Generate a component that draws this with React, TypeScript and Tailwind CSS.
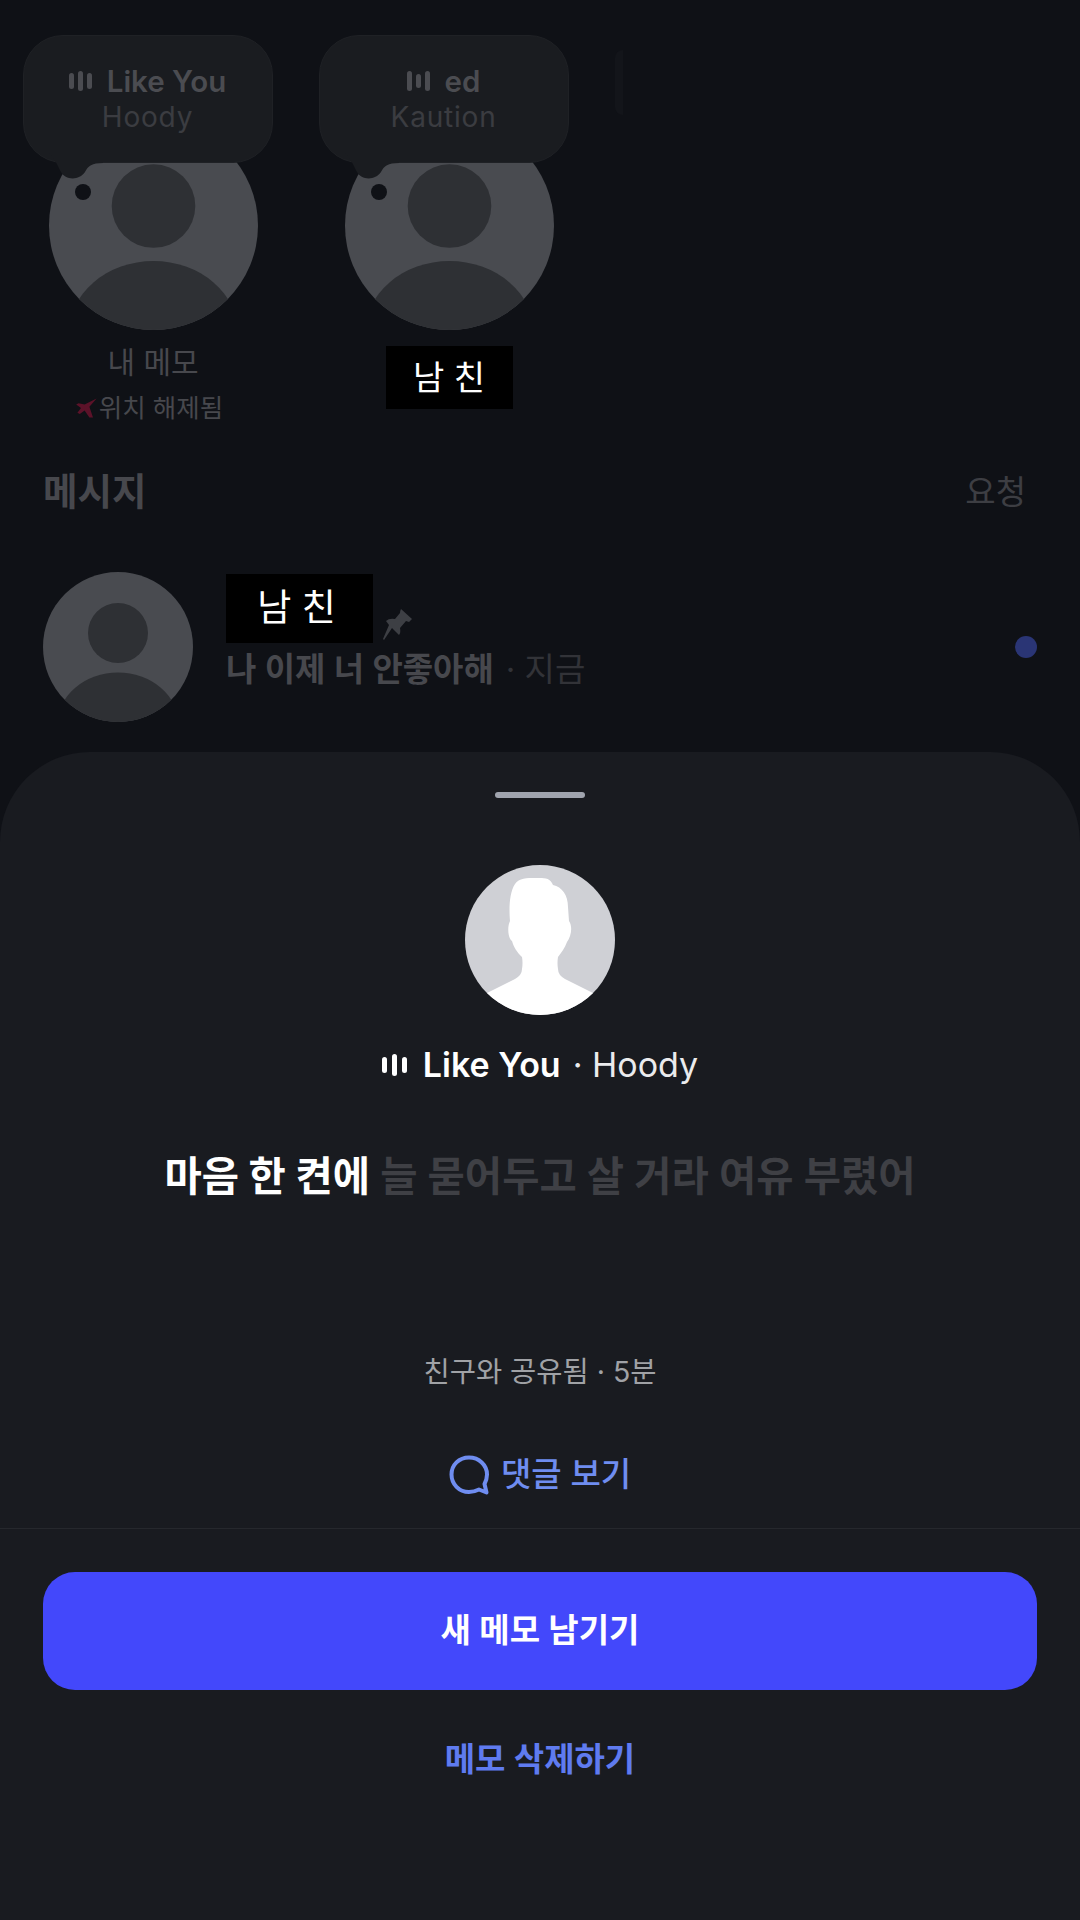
const sans = "font-['Inter','Noto_Sans_CJK_KR',sans-serif]";

function Bars({ heights, className }: { heights: number[]; className: string }) {
  return (
    <span className={`flex items-center ${className}`}>
      {heights.map((h, i) => (
        <span key={i} className="w-[5px] rounded-full bg-current" style={{ height: h }} />
      ))}
    </span>
  );
}

function PlaceholderAvatar({ className }: { className: string }) {
  return (
    <svg viewBox="0 0 100 100" className={className}>
      <defs>
        <clipPath id="avatar-clip">
          <circle cx="50" cy="50" r="50" />
        </clipPath>
      </defs>
      <circle cx="50" cy="50" r="50" fill="#494b50" />
      <circle cx="50" cy="40.7" r="20" fill="#2e3034" />
      <ellipse cx="50" cy="102" rx="40.6" ry="35" fill="#2e3034" clipPath="url(#avatar-clip)" />
    </svg>
  );
}

function NoteBubble({ title, artist, bars }: { title: string; artist: string; bars: number[] }) {
  return (
    <div className="absolute -left-[26px] -top-[86px] z-10 h-[128px] w-[250px]">
      <div className="flex h-full flex-col items-center justify-center rounded-[40px] border border-[#1f2125] bg-[#1a1c20]">
        <div className="flex items-center gap-[15px] text-[29.5px] font-semibold leading-[36px] text-[#4b4c51]">
          <Bars heights={bars} className="gap-[4px] text-[#4b4c51]" />
          {title}
        </div>
        <div className="text-[28px] leading-[36px] tracking-[0.8px] text-[#3b3c41]">{artist}</div>
      </div>
      {/* tail that runs out of the lower left corner */}
      <svg viewBox="0 0 250 150" className="absolute left-0 top-0 h-[150px] w-[250px]">
        <path fill="#1a1c20" d="M26 118 C33 125 34 130 38 137 C42 145 56 146 62 137 C65 131 69 128 80 128 L80 110 L26 110 Z" />
      </svg>
      <div className="absolute left-[52px] top-[149px] h-[16px] w-[16px] rounded-full bg-[#0f1116]" />
    </div>
  );
}

function Story({ children, note }: { children: React.ReactNode; note: React.ReactNode }) {
  return (
    <div className="relative flex w-[209px] flex-col items-center">
      {note}
      <PlaceholderAvatar className="h-[209px] w-[209px]" />
      {children}
    </div>
  );
}

function MaskedName({ className, textClass }: { className: string; textClass: string }) {
  return (
    <div className={`flex items-center justify-center bg-black text-white ${className}`}>
      <span className={textClass}>남 친</span>
    </div>
  );
}

function Silhouette() {
  return (
    <svg viewBox="0 0 150 150" className="h-[150px] w-[150px]">
      <defs>
        <clipPath id="sheet-avatar-clip">
          <circle cx="75" cy="75" r="75" />
        </clipPath>
      </defs>
      <circle cx="75" cy="75" r="75" fill="#cfd0d5" />
      <path
        fill="#ffffff"
        clipPath="url(#sheet-avatar-clip)"
        d="M20 129 L50 114 Q57 110 57 104 Q58 98 57 92 C52 87 49 83 47 76 C43 73 42 62 45 56 C44 45 44 28 50 19 C54 13 62 13 70 13 C78 13 85 12 88 20 C97 22 103 30 103 42 L104 56 C108 62 106 72 102 77 C100 83 96 88 93 92 Q92 98 93 104 Q93 110 100 114 L130 129 L130 160 L20 160 Z"
      />
    </svg>
  );
}

function PinIcon() {
  return (
    <svg viewBox="0 0 30 32" className="mb-[2px] ml-[10px] h-[32px] w-[30px]">
      <path fill="#3d3f44" d="M18 0 L29 10 L26 13 L23 12 L17 19 Q18 24 16 26 L9 19 L1 31 L0 30 L6 16 L3 12 Q6 9 12 10 L17 4 Q17 2 18 0 Z" />
    </svg>
  );
}

function CommentIcon() {
  return (
    <svg viewBox="0 0 40 40" className="h-[40px] w-[40px]" fill="none">
      <path
        stroke="#6f8df0"
        strokeWidth="4"
        strokeLinejoin="round"
        d="M20 2.5 C10 2.5 2.5 10 2.5 19.5 C2.5 29 10 37 20 37 C24 37 27 36 30 34.5 L37.5 37.5 L35.5 29 C37 26 38 23 38 19.5 C38 10 30 2.5 20 2.5 Z"
      />
    </svg>
  );
}

export default function App() {
  return (
    <div className={`flex h-[1920px] w-[1080px] flex-col overflow-hidden bg-[#0f1116] ${sans}`}>
      <section className="flex h-[752px] flex-col">
        <div className="flex gap-[87px] pl-[48.5px] pt-[121px]">
          <Story note={<NoteBubble title="Like You" artist="Hoody" bars={[16, 20, 16]} />}>
            <div className="mt-[14px] text-[30px] leading-[36px] text-[#47484d]">내 메모</div>
            <div className="mt-[11px] flex items-center text-[25.5px] leading-[34px] text-[#47484d] pr-[8px]">
              <svg viewBox="0 0 20 20" className="h-[24px] w-[24px] blur-[0.6px]">
                <path fill="#5c1229" d="M18 2 L12 9 L15 18 L12 18 L8 12 L4 15 L2 14 L5 10 L1 7 L3 6 L8 7 Z" />
              </svg>
              위치 해제됨
            </div>
          </Story>
          <Story note={<NoteBubble title="ed" artist="Kaution" bars={[20, 14, 20]} />}>
            <MaskedName className="mt-[16px] h-[63px] w-[127px]" textClass="text-[34px]" />
          </Story>
          <div className="relative w-[209px]">
            <div className="absolute -left-[26px] -top-[71px] h-[65px] w-[8px] rounded-l-[30px] bg-[#13151a]" />
          </div>
        </div>

        <div className="mt-[43px] flex items-center justify-between pl-[43px] pr-[54px]">
          <h2 className="text-[37.5px] font-bold leading-[48px] text-[#47484d]">메시지</h2>
          <span className="text-[33px] leading-[48px] text-[#3d3e43]">요청</span>
        </div>

        <div className="mt-[56px] flex items-center pl-[43px] pr-[43px]">
          <PlaceholderAvatar className="h-[150px] w-[150px]" />
          <div className="ml-[33px] flex flex-1 flex-col pb-[30px]">
            <div className="flex items-end">
              <MaskedName className="h-[69px] w-[147px]" textClass="pr-[6px] text-[37px]" />
              <PinIcon />
            </div>
            <div className="mt-[4px] flex items-center text-[33px] leading-[44px]">
              <span className="font-semibold text-[#47484d]">나 이제 너 안좋아해</span>
              <span className="ml-[12px] text-[#323338]">· 지금</span>
            </div>
          </div>
          <div className="h-[22px] w-[22px] rounded-full bg-[#2a3575]" />
        </div>
      </section>

      <section className="flex flex-1 flex-col items-center rounded-t-[90px] bg-[#191b20]">
        <div className="mt-[40px] h-[6px] w-[90px] rounded-full bg-[#a0a4ae]" />
        <div className="mt-[67px]">
          <Silhouette />
        </div>
        <div className="mt-[30px] flex h-[40px] items-center text-[34px] leading-[40px] text-white">
          <Bars heights={[16, 22, 16]} className="gap-[5px] text-white" />
          <span className="ml-[16px] font-semibold">Like You</span>
          <span className="ml-[12px] text-[#ebebed]">· Hoody</span>
        </div>
        <p className="mt-[64px] text-[40.5px] font-semibold leading-[56px] text-[#3f4045]">
          <span className="font-bold text-white">마음 한 켠에</span> 늘 묻어두고 살 거라 여유 부렸어
        </p>
        <div className="mt-[149px] text-[28.5px] leading-[36px] text-[#a0a2a6]">친구와 공유됨 · 5분</div>
        <div className="mt-[63px] flex h-[44px] items-center gap-[12px] text-[33px] font-medium text-[#6f8df0]">
          <CommentIcon />
          댓글 보기
        </div>
        <div className="mt-[31px] h-[1px] w-full bg-[#26282d]" />
        <div className="mt-[43px] w-full px-[43px]">
          <button className="flex h-[118px] w-full items-center justify-center rounded-[32px] bg-[#4348fb] text-[33px] font-semibold text-white">
            새 메모 남기기
          </button>
        </div>
        <div className="mt-[47px] text-[33px] font-semibold leading-[44px] text-[#5f7bf0]">메모 삭제하기</div>
      </section>
    </div>
  );
}
